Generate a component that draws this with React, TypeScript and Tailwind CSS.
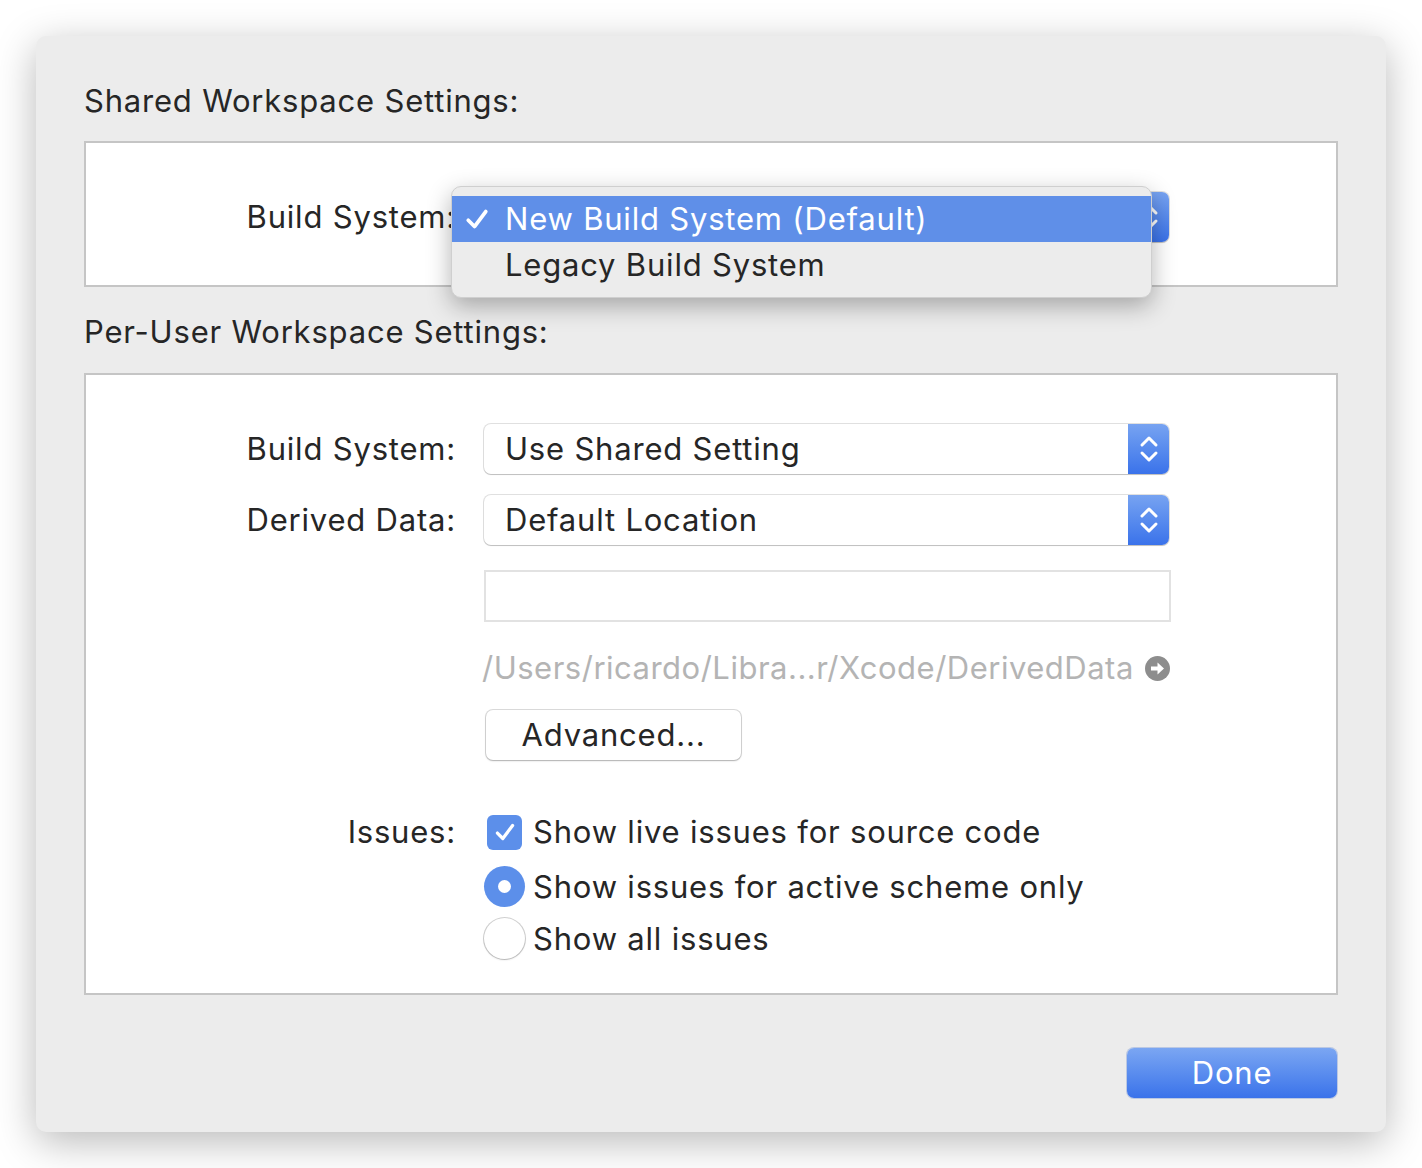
import React from 'react';

// --- ICONS ---

const Stepper = () => (
    <div className="w-[41px] h-full rounded-r-[7px] bg-gradient-to-b from-[#77a3f1] to-[#3a72ea] flex items-center justify-center">
        <svg width="22" height="34" viewBox="0 0 22 34" fill="none" stroke="white" strokeWidth="3" strokeLinecap="round" strokeLinejoin="round">
            <polyline points="4,13 11,6 18,13" />
            <polyline points="4,21 11,28 18,21" />
        </svg>
    </div>
);

const GoArrow = () => (
    <svg width="25" height="25" viewBox="0 0 25 25">
        <circle cx="12.5" cy="12.5" r="12.5" fill="#8d8d8d" />
        <path d="M6 10.5h6.5V6.5l6.5 6-6.5 6v-4H6z" fill="white" />
    </svg>
);

const CheckMark = ({ className }: { className?: string }) => (
    <svg className={className} viewBox="0 0 24 24" fill="none" stroke="currentColor" strokeWidth="3" strokeLinecap="round" strokeLinejoin="round">
        <polyline points="5,13 10,18 19,6" />
    </svg>
);

// --- CONTROLS ---

const Select = ({ value }: { value: string }) => (
    <div className="w-[685px] h-[50px] flex rounded-[7px] bg-white shadow-[0_0_0_1px_rgba(0,0,0,0.12),0_1px_1px_rgba(0,0,0,0.15)]">
        <div className="flex-1 flex items-center pl-[21px] text-[#262626]">{value}</div>
        <Stepper />
    </div>
);

const Label = ({ children }: { children: React.ReactNode }) => (
    <div className="w-[372px] pr-[2px] text-right text-[#262626] shrink-0 whitespace-nowrap">{children}</div>
);

const Row = ({ label, children, className }: { label?: string; children: React.ReactNode; className?: string }) => (
    <div className={`flex items-center gap-[26px] ${className ?? ''}`}>
        <Label>{label}</Label>
        {children}
    </div>
);

export default function App() {
    return (
        <div className="w-full min-h-[1168px] bg-white pt-[36px] pl-[36px]" style={{ fontFamily: 'Inter, "Noto Sans", sans-serif' }}>
            <div className="w-[1350px] h-[1096px] rounded-[10px] bg-[#ececec] shadow-[0_10px_40px_rgba(0,0,0,0.28)] flex flex-col px-[48px] pt-[45px] text-[31px] tracking-[0.8px] leading-[40px]">

                {/* Shared */}
                <h2 className="text-[#262626]">Shared Workspace Settings:</h2>
                <div className="relative mt-[20px] h-[146px] border-2 border-[#c5c5c5] bg-white pt-[49px]">
                    <Row label="Build System:">
                        <Select value="New Build System (Default)" />
                    </Row>

                    {/* Popup menu */}
                    <div className="absolute left-[365px] top-[43px] w-[701px] h-[112px] rounded-[10px] bg-[#ececec] border border-[#cfcfcf] shadow-[0_8px_24px_rgba(0,0,0,0.3)] pt-[9px]">
                        <div className="h-[46px] bg-[#5f8fe8] text-white flex items-center">
                            <CheckMark className="w-[30px] h-[30px] ml-[10px] mr-[13px]" />
                            <span>New Build System (Default)</span>
                        </div>
                        <div className="h-[46px] text-[#262626] flex items-center pl-[53px]">Legacy Build System</div>
                    </div>
                </div>

                {/* Per-user */}
                <h2 className="mt-[25px] text-[#262626]">Per-User Workspace Settings:</h2>
                <div className="mt-[21px] h-[622px] border-2 border-[#c5c5c5] bg-white pt-[49px]">
                    <Row label="Build System:">
                        <Select value="Use Shared Setting" />
                    </Row>
                    <Row label="Derived Data:" className="mt-[21px]">
                        <Select value="Default Location" />
                    </Row>
                    <Row className="mt-[25px]">
                        <div className="w-[687px] h-[52px] border-2 border-[#e2e2e2] bg-white" />
                    </Row>
                    <Row className="mt-[26px]">
                        <div className="-ml-[2px] flex items-center gap-[11px] text-[#b4b4b4] whitespace-nowrap tracking-[0.5px]">
                            <span>/Users/ricardo/Libra...r/Xcode/DerivedData</span>
                            <GoArrow />
                        </div>
                    </Row>
                    <Row className="mt-[22px]">
                        <button className="ml-[2px] w-[255px] h-[50px] rounded-[7px] bg-white text-[#262626] shadow-[0_0_0_1px_rgba(0,0,0,0.14),0_1px_2px_rgba(0,0,0,0.2)]">
                            Advanced...
                        </button>
                    </Row>

                    <Row label="Issues:" className="mt-[52px]">
                        <div className="flex items-center gap-[11px]">
                            <div className="ml-[3px] w-[35px] h-[35px] rounded-[6px] bg-[#5c8fea] text-white flex items-center justify-center">
                                <CheckMark className="w-[26px] h-[26px]" />
                            </div>
                            <span className="text-[#262626]">Show live issues for source code</span>
                        </div>
                    </Row>
                    <Row className="mt-[14px]">
                        <div className="flex items-center gap-[8px]">
                            <div className="w-[41px] h-[41px] rounded-full bg-[#5c8fea] flex items-center justify-center">
                                <div className="w-[13px] h-[13px] rounded-full bg-white" />
                            </div>
                            <span className="text-[#262626]">Show issues for active scheme only</span>
                        </div>
                    </Row>
                    <Row className="mt-[11px]">
                        <div className="flex items-center gap-[8px]">
                            <div className="w-[41px] h-[41px] rounded-full bg-white shadow-[0_0_0_1px_rgba(0,0,0,0.18),0_1px_2px_rgba(0,0,0,0.15)]" />
                            <span className="text-[#262626]">Show all issues</span>
                        </div>
                    </Row>
                </div>

                {/* Footer */}
                <div className="mt-[53px] flex justify-end pr-[1px]">
                    <button className="w-[210px] h-[50px] rounded-[7px] bg-gradient-to-b from-[#7ba6f2] to-[#3a72ea] text-white shadow-[0_0_0_1px_rgba(40,90,200,0.25)]">
                        Done
                    </button>
                </div>
            </div>
        </div>
    );
}
